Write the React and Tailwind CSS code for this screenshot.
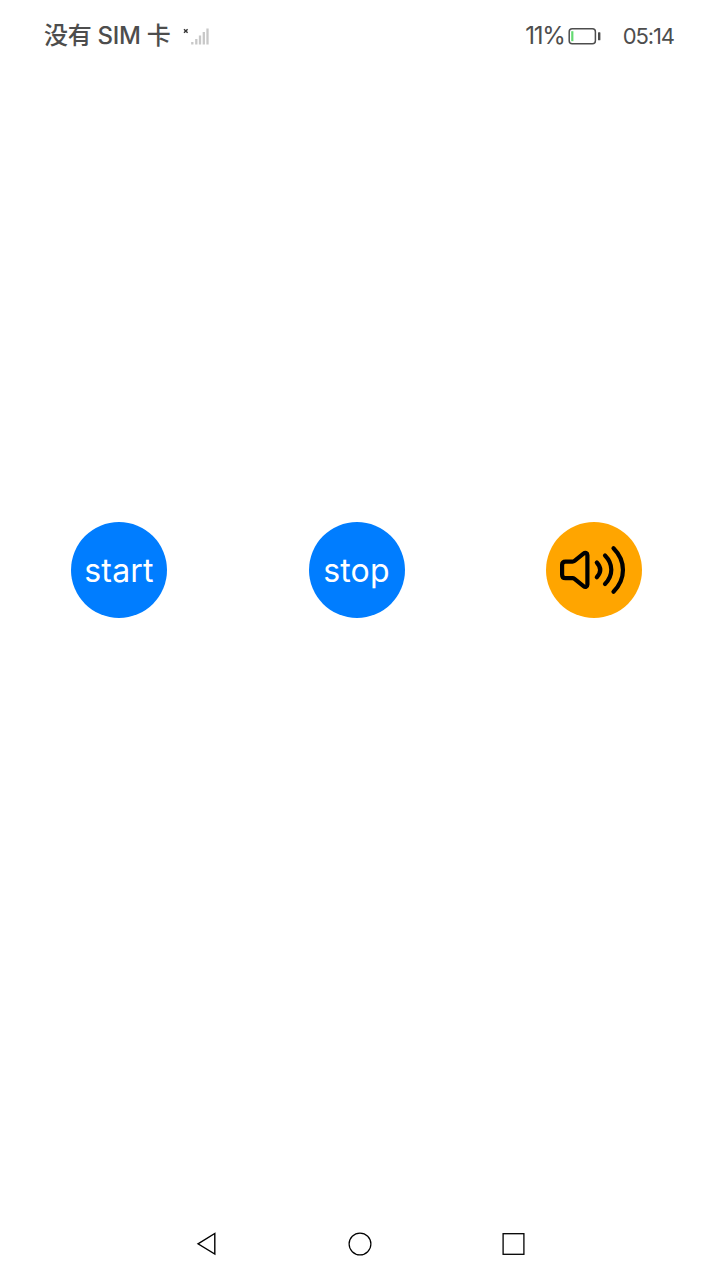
function SignalIcon() {
  return (
    <svg className="ml-[12px] h-[22px] w-[28px] shrink-0" viewBox="0 0 28 22" fill="none">
      <path d="M2 4.2L5.6 7.8M5.6 4.2L2 7.8" stroke="#333" strokeWidth="1.4" />
      <path d="M10.3 17V19.4M14.3 14V19.4M18 10.5V19.4M21.8 7V19.4M25.5 3.5V19.4" stroke="#c8c8c8" strokeWidth="2.3" />
    </svg>
  );
}

function BatteryIcon() {
  return (
    <svg className="ml-[3px] h-[18px] w-[34px] shrink-0" viewBox="0 0 34 18" fill="none">
      <rect x="1.2" y="1.7" width="26.2" height="15" rx="3" stroke="#4d4d4d" strokeWidth="1.5" />
      <rect x="3.2" y="4.2" width="2.2" height="10" fill="#64da72" />
      <rect x="30" y="5.2" width="2.4" height="8" rx=".5" fill="#4d4d4d" />
    </svg>
  );
}

function VolumeIcon() {
  return (
    <svg className="size-24" viewBox="0 0 96 96" fill="none" stroke="#000" strokeWidth="4.2" strokeLinecap="round" strokeLinejoin="round">
      <path d="M19.5 39.6H26.5Q27.6 39.6 28.5 38.9L37.5 31.6C39.3 30.2 41.4 31 41.4 33.3V62.5C41.4 64.8 39.3 65.5 37.5 64.1L28.5 56.9Q27.6 56.2 26.5 56.2H19.5Q16.1 56.2 16.1 52.8V43Q16.1 39.6 19.5 39.6Z" />
      <path d="M50.8 40.5Q57.6 48 50.8 55.3" />
      <path d="M59 33.5C67.4 42 67.4 53.5 59 62" />
      <path d="M67.5 26.3C80.1 39 80.1 57 67.5 69.7" />
    </svg>
  );
}

export default function App() {
  return (
    <div className="flex h-screen w-full flex-col bg-white font-['Inter','Noto_Sans_CJK_SC',sans-serif]">
      <header className="flex h-[72px] shrink-0 items-center justify-between pr-[46px] pl-11 text-[#4d4d4d]">
        <div className="flex items-center">
          <span className="text-2xl leading-none font-medium tracking-[-0.3px] whitespace-nowrap">没有 SIM 卡</span>
          <SignalIcon />
        </div>
        <div className="flex items-center">
          <span className="text-2xl leading-none tracking-[-1.2px]">11%</span>
          <BatteryIcon />
          <span className="ml-[21px] text-[22px] leading-none tracking-[-1.1px]">05:14</span>
        </div>
      </header>
      <main className="flex flex-1 items-start justify-between pt-[450px] pr-[78px] pl-[71px]">
        <button className="flex size-24 items-center justify-center rounded-full bg-[#007dff] pt-[2px] text-[32px] leading-none tracking-[0.2px] text-white">start</button>
        <button className="flex size-24 items-center justify-center rounded-full bg-[#007dff] pt-[2px] text-[32px] leading-none tracking-[0.2px] text-white">stop</button>
        <button className="size-24 rounded-full bg-[#ffa500]" aria-label="Volume">
          <VolumeIcon />
        </button>
      </main>
      <nav className="flex h-[72px] shrink-0 items-center justify-between pr-[194px] pl-[194px]">
        <svg className="size-6" viewBox="0 0 24 24" fill="none" stroke="#000" strokeWidth="1.4">
          <path d="M4 11.8L20.8 1.4V22.1Z" />
        </svg>
        <svg className="size-6" viewBox="0 0 24 24" fill="none" stroke="#000" strokeWidth="1.2">
          <circle cx="12" cy="12" r="10.9" />
        </svg>
        <svg className="size-6" viewBox="0 0 24 24" fill="none" stroke="#000" strokeWidth="1.3">
          <rect x="1.1" y="1.7" width="20.8" height="20.6" />
        </svg>
      </nav>
    </div>
  );
}
